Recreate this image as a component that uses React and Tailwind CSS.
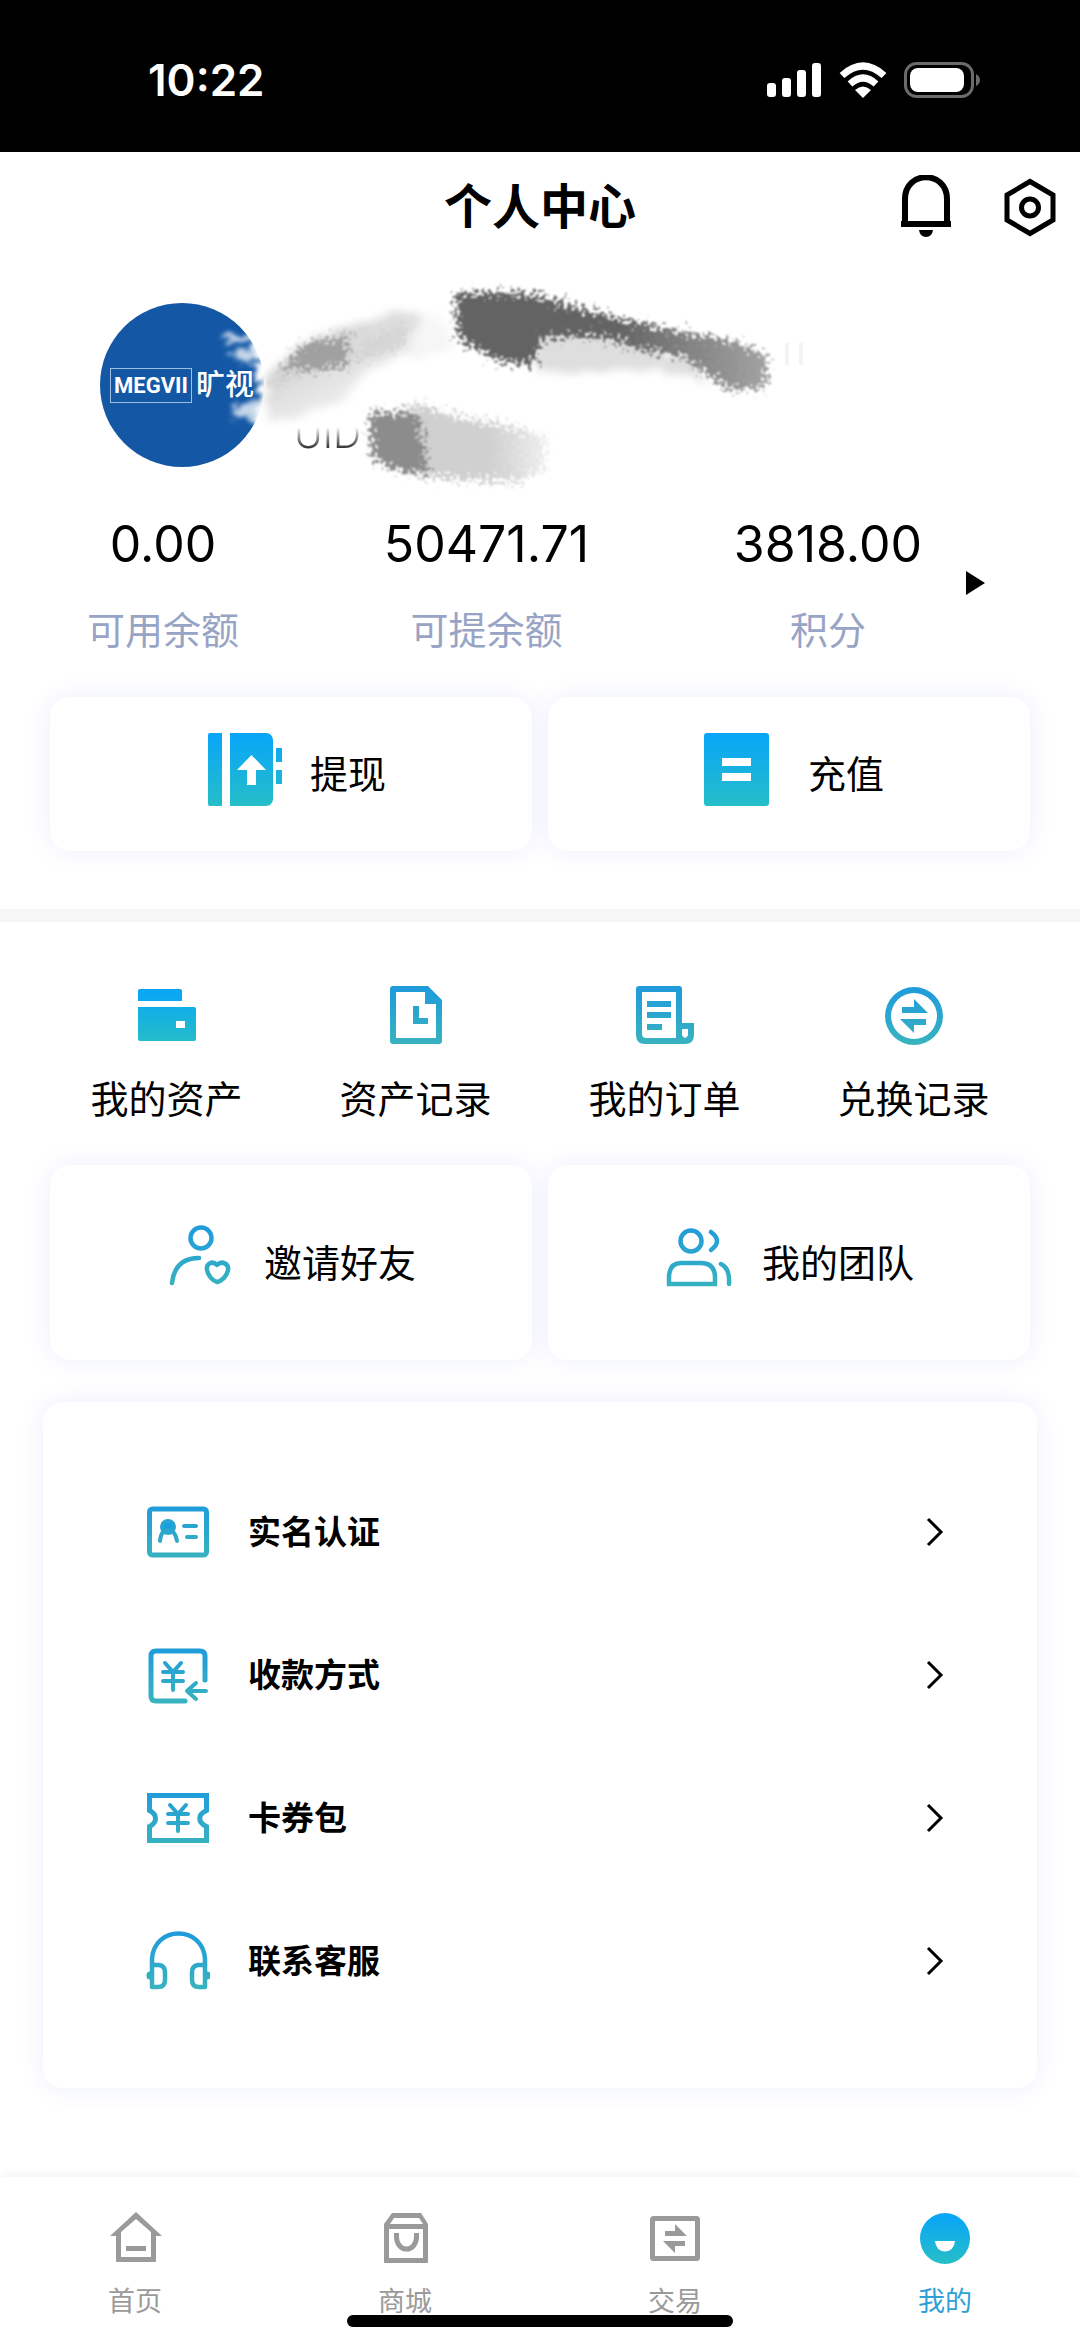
import React, { useState } from 'react';

// icons drawn with the vertical blue -> teal gradient
function GradientIcon({ id, size, height, line, muted, children }) {
  const h = height || size;
  const dim = line || muted;
  return (
    <svg width={size} height={h} viewBox={`0 0 ${size} ${h}`} aria-hidden="true" className="shrink-0">
      <defs>
        <linearGradient id={id} gradientUnits="userSpaceOnUse" x1="0" y1="4" x2="0" y2={h - 4}>
          <stop offset="0" stopColor={dim ? '#1f9bdc' : '#08a5f8'} />
          <stop offset="1" stopColor={dim ? '#38b3be' : '#25bec8'} />
        </linearGradient>
      </defs>
      {line ? (
        <g fill="none" stroke={`url(#${id})`} strokeWidth={line} strokeLinecap="round" strokeLinejoin="round">
          {children}
        </g>
      ) : (
        <g fill={`url(#${id})`}>{children}</g>
      )}
    </svg>
  );
}

function WithdrawIcon() {
  return (
    <GradientIcon id="withdraw" size={90} height={80}>
      <path d="M12 5a2 2 0 0 1 2-2h12v73H14a2 2 0 0 1-2-2z" />
      <path
        fillRule="evenodd"
        d="M34 3h36a7 7 0 0 1 7 7v59a7 7 0 0 1-7 7H34zM55.500 25L41 40h10v15h9V40h10z"
      />
      <path d="M80 18h6v14h-6zM80 40h6v14h-6z" />
    </GradientIcon>
  );
}

function RechargeIcon() {
  return (
    <GradientIcon id="recharge" size={90} height={80}>
      <path
        fillRule="evenodd"
        d="M13 3h59a3 3 0 0 1 3 3v67a3 3 0 0 1-3 3H13a3 3 0 0 1-3-3V6a3 3 0 0 1 3-3zM28 28v8h29v-8zM28 43v8h29v-8z"
      />
    </GradientIcon>
  );
}

function WalletIcon() {
  return (
    <GradientIcon id="wallet" size={64}>
      <path d="M5 5h40a2 2 0 0 1 2 2v10H3V7a2 2 0 0 1 2-2z" />
      <path
        fillRule="evenodd"
        d="M3 23h56a2 2 0 0 1 2 2v30a2 2 0 0 1-2 2H5a2 2 0 0 1-2-2zM41 37v7h9v-7z"
      />
    </GradientIcon>
  );
}

function RecordIcon() {
  return (
    <GradientIcon id="record" size={64} muted>
      <path
        fillRule="evenodd"
        d="M9 2h35l14 14v41a3 3 0 0 1-3 3H9a3 3 0 0 1-3-3V5a3 3 0 0 1 3-3zM12 8v46h40V20H41V8z"
      />
      <path d="M29 22h6v12h9v6H29z" />
    </GradientIcon>
  );
}

function OrderIcon() {
  return (
    <GradientIcon id="order" size={64} muted>
      <path
        fillRule="evenodd"
        d="M6 2h40a3 3 0 0 1 3 3v34h12v12q0 9-9 9H12q-9 0-9-9V5a3 3 0 0 1 3-3zM9 8v42q0 4 4 4h30V8zM49 45v6q1 3 3 3t3-3v-6z"
      />
      <path d="M14 17h24v6H14zM14 28h24v6H14zM14 40h15v6H14z" />
    </GradientIcon>
  );
}

function ExchangeIcon() {
  return (
    <GradientIcon id="exchange" size={64} muted>
      <path
        fillRule="evenodd"
        d="M32 3a29 29 0 1 1 0 58a29 29 0 1 1 0-58zM32 9a23 23 0 1 0 0 46a23 23 0 1 0 0-46z"
      />
      <path d="M20 23h12v-8l14 14H20zM44 41H32v8L18 35h26z" />
    </GradientIcon>
  );
}

function InviteIcon() {
  return (
    <GradientIcon id="invite" size={70} line={4.5}>
      <circle cx="35" cy="16" r="10.500" />
      <path d="M6 61Q9 36 33 36" />
      <path d="M51 43c-5-5-11-1-10 5c1 6 6 11 10 12c5-1 10-6 11-12c1-6-6-10-11-5z" />
    </GradientIcon>
  );
}

function TeamIcon() {
  return (
    <GradientIcon id="team" size={70} line={4.5}>
      <circle cx="27" cy="19" r="10.500" />
      <path d="M47 10q12 9 0 18" />
      <path strokeLinejoin="miter" d="M5 62V54Q6 41 17 41H37Q50 41 51 54V62Z" />
      <path d="M57 42q9 4 8 20" />
    </GradientIcon>
  );
}

function IdCardIcon() {
  return (
    <GradientIcon id="idcard" size={64} line={5}>
      <rect x="3.500" y="9" width="57" height="46" rx="3" />
      <circle cx="22" cy="27" r="6" fill="#159fdf" strokeWidth="4" />
      <path d="M14 41q1-11 8-11t9 11" strokeWidth="4" />
      <path d="M38 26h12M41 37h9" strokeWidth="4" />
    </GradientIcon>
  );
}

function PayIcon() {
  return (
    <GradientIcon id="pay" size={64} line={5}>
      <path d="M39 58H10q-5 0-5-5V13q0-5 5-5h44q5 0 5 5v24" />
      <path d="M19 20l8 9l8-9M17 29h20M17 38h20M27 29v18" strokeWidth="4" />
      <path d="M60 48H42M50 40l-9 8l9 8" strokeWidth="4" />
    </GradientIcon>
  );
}

function CouponIcon() {
  return (
    <GradientIcon id="coupon" size={64} line={5}>
      <path
        strokeLinejoin="miter"
        d="M3.500 9.500h57v15c-9 4-9 12 0 16v14h-57v-14c8-4 8-12 0-16z"
      />
      <path d="M24 19l8 9l8-9M22 28h20M22 37h20M32 28v17" strokeWidth="4" />
    </GradientIcon>
  );
}

function ServiceIcon() {
  return (
    <GradientIcon id="service" size={64} line={4.5}>
      <path d="M6 36v-6C8-4 57-4 59 30v6" />
      <path d="M6 36h7q6 1 6 7v8q0 7-7 7H6zM59 36h-7q-6 1-6 7v8q0 7 7 7h6z" />
      <path strokeWidth="7" d="M4 46v1M61 46v1" />
    </GradientIcon>
  );
}

function HomeIcon() {
  return (
    <svg width="56" height="56" viewBox="0 0 56 56" fill="currentColor" aria-hidden="true">
      <path fillRule="evenodd" d="M29 1L55 25h-6v25a1 1 0 0 1-1 1H10a1 1 0 0 1-1-1V25H3zM29 8L14 21v25h30V21z" />
      <path d="M19 35h20v5H19z" />
    </svg>
  );
}

function MallIcon() {
  return (
    <svg width="56" height="56" viewBox="0 0 56 56" fill="currentColor" aria-hidden="true">
      <path
        fillRule="evenodd"
        d="M15 2h29l7 11v38a1 1 0 0 1-1 1H8a1 1 0 0 1-1-1V13zM17 7l-4 6h33l-4-6zM12 18v29h34V18z"
      />
      <path d="M19.500 22v4a9.500 11.500 0 0 0 20 0v-4" fill="none" stroke="currentColor" strokeWidth="5" />
    </svg>
  );
}

function TradeIcon() {
  return (
    <svg width="56" height="56" viewBox="0 0 56 56" aria-hidden="true">
      <rect x="5.500" y="7.500" width="45" height="40" rx="1" fill="none" stroke="currentColor" strokeWidth="5" />
      <path d="M18 20h10v-7l12 12H18zM38 35H28v7L16 30h22z" fill="currentColor" />
    </svg>
  );
}

function MineIcon() {
  return (
    <GradientIcon id="mine" size={56}>
      <path
        fillRule="evenodd"
        d="M28 2a25 25.500 0 1 1 0 51a25 25.500 0 1 1 0-51zM18 30q1 10 10 10.500q9-.5 10-10.500z"
      />
    </GradientIcon>
  );
}

function StatusBar() {
  return (
    <div className="flex h-[152px] items-center justify-between bg-black pt-2 pr-[98px] pl-[148px] text-white">
      <span className="text-[44px] leading-[56px] font-semibold">10:22</span>
      <div className="flex items-center gap-4">
        <svg width="56" height="36" viewBox="0 0 56 36" fill="currentColor" aria-hidden="true">
          <rect x="0" y="21" width="9" height="14" rx="3" />
          <rect x="15" y="16" width="9" height="19" rx="3" />
          <rect x="30" y="8" width="9" height="27" rx="3" />
          <rect x="45" y="1" width="9" height="34" rx="3" />
        </svg>
        <svg width="48" height="36" viewBox="0 0 48 36" aria-hidden="true">
          <g fill="none" stroke="currentColor" strokeWidth="7">
            <path d="M3 13.500Q24-5.500 45 13.500" />
            <path d="M11 22Q24 10 37 22" />
          </g>
          <path d="M16 28Q24 21 32 28L24 36Z" fill="currentColor" />
        </svg>
        <svg width="79" height="36" viewBox="0 0 79 36" aria-hidden="true">
          <rect x="2.500" y="1.500" width="67" height="33" rx="11" fill="none" stroke="#6b6b6b" strokeWidth="3" />
          <rect x="7" y="6" width="54" height="24" rx="8" fill="currentColor" />
          <path d="M73 12q4 2 4 6t-4 6z" fill="#6b6b6b" />
        </svg>
      </div>
    </div>
  );
}

function Header() {
  return (
    <header className="grid h-[110px] grid-cols-[1fr_auto_1fr] items-center">
      <span />
      <h1 className="text-[48px] leading-[64px] font-bold">个人中心</h1>
      <div className="flex justify-end gap-10 pr-[18px]">
        <button type="button" aria-label="消息">
          <svg width="64" height="64" viewBox="0 0 64 64" fill="none" stroke="currentColor" strokeWidth="6" aria-hidden="true">
            <path d="M11 49V24C11-5 53-5 53 24v25" />
            <path d="M7 49h50" />
            <path d="M25 55h14q-1 7-7 7t-7-7z" fill="currentColor" stroke="none" />
          </svg>
        </button>
        <button type="button" aria-label="设置">
          <svg width="64" height="64" viewBox="0 0 64 64" fill="none" stroke="currentColor" strokeWidth="5" aria-hidden="true">
            <path d="M32 6.500l23 13.500v25L32 58.500L9 45V20z" />
            <circle cx="32" cy="32.500" r="8.500" />
          </svg>
        </button>
      </div>
    </header>
  );
}

// grey brush strokes that cover the user name and the id
function BrushStrokes() {
  return (
    <svg
      width="740"
      height="230"
      viewBox="80 270 740 230"
      aria-hidden="true"
      className="pointer-events-none absolute top-2 left-20"
    >
      <defs>
        <filter id="rough" x="-10%" y="-10%" width="120%" height="120%">
          <feTurbulence type="fractalNoise" baseFrequency="0.28" numOctaves="2" seed="4" />
          <feDisplacementMap in="SourceGraphic" scale="34" xChannelSelector="R" yChannelSelector="G" />
          <feGaussianBlur stdDeviation="1.1" />
        </filter>
        <filter id="soft" x="-20%" y="-20%" width="140%" height="140%">
          <feTurbulence type="fractalNoise" baseFrequency="0.05 0.15" numOctaves="3" seed="9" />
          <feDisplacementMap in="SourceGraphic" scale="18" xChannelSelector="R" yChannelSelector="G" />
          <feGaussianBlur stdDeviation="4" />
        </filter>
        <filter id="streak" x="-20%" y="-20%" width="140%" height="140%">
          <feTurbulence type="fractalNoise" baseFrequency="0.06 0.25" numOctaves="2" seed="2" />
          <feDisplacementMap in="SourceGraphic" scale="24" xChannelSelector="R" yChannelSelector="G" />
          <feGaussianBlur stdDeviation="2" />
        </filter>
        <linearGradient id="nameFade" gradientUnits="userSpaceOnUse" x1="300" y1="340" x2="350" y2="430">
          <stop offset="0" stopColor="#d0d0d0" />
          <stop offset="1" stopColor="#f8f8f8" />
        </linearGradient>
        <linearGradient id="tailFade" x1="0" y1="0" x2="1" y2="0">
          <stop offset="0" stopColor="#666666" />
          <stop offset="0.5" stopColor="#858585" />
          <stop offset="1" stopColor="#a2a2a2" />
        </linearGradient>
        <linearGradient id="idFade" gradientUnits="userSpaceOnUse" x1="490" y1="0" x2="552" y2="0">
          <stop offset="0" stopColor="#d0d0d0" />
          <stop offset="1" stopColor="#f2f2f2" />
        </linearGradient>
      </defs>
      <g filter="url(#streak)" fill="#fff">
        <path opacity="0.75" d="M226 334h30v8h-28zM234 350l28-4v18l-24-4z" />
        <path opacity="0.75" d="M232 404l26-4l6 8l-14 14l-16-4z" />
        <path d="M252 330l14 6l8 90l-20-2l6-30z" />
      </g>
      <g filter="url(#soft)">
        <path fill="url(#nameFade)" d="M266 380l30-34l50-18l60-18l22 10l-10 28l-50 22l-24 30l-44 18l-30 2z" />
        <path fill="#f6f6f6" d="M420 318l26 2l10 30l-50 12z" />
        <path fill="#dedede" d="M536 332h92l20 14l40 10l20 28l-50-14l-50 2h-70z" />
      </g>
      <g filter="url(#rough)">
        <path fill="#cfcfcf" d="M268 384l18-20l60-4l20-20l44-16l-6 22l-40 14l-50 6l-34 20z" opacity="0.6" />
        <path fill="#9a9a9a" d="M280 370l26-26l42-8v30l-34 4z" opacity="0.9" />
        <path fill="#646464" d="M456 294l27-2l46 2l50 14l54 14v20l-50-6l-42 2l-8 28l-30-4l-34-16l-12-10z" />
        <path fill="url(#tailFade)" d="M622 320l62 12l54 10l28 14v32l-38 2l-22-16l-24-18l-58-10z" />
        <path fill="url(#idFade)" d="M400 408l22-2l40 12l54 10l32 10l-4 16l2 14l-26 14l-56-2l-60-6l-10-4z" />
        <path fill="#8c8c8c" d="M370 412l48 2l6 30l4 30l-28-2l-28-14z" />
      </g>
      <path stroke="#f4f4f4" strokeWidth="4" d="M787 343v22M801 343v22" />
    </svg>
  );
}

function Profile() {
  return (
    <section className="relative flex items-end gap-[30px] pt-[41px] pl-[100px]">
      <div className="flex size-[164px] items-center justify-center gap-1 rounded-full bg-[#1458a5] text-white">
        <span className="border border-[#9cc0e4] px-[3px] font-[Roboto,'Liberation_Sans',sans-serif] text-[22px] leading-[33px] font-bold">
          MEGVII
        </span>
        <span className="text-[29px] leading-[36px] font-medium whitespace-nowrap">旷视</span>
      </div>
      <p className="bg-gradient-to-b from-white from-30% to-black to-85% bg-clip-text pb-[9px] text-[39px] leading-[48px] font-light text-transparent">
        UID
      </p>
      <BrushStrokes />
    </section>
  );
}

const stats = [
  { value: '0.00', label: '可用余额' },
  { value: '50471.71', label: '可提余额' },
  { value: '3818.00', label: '积分' },
];

function Stats() {
  return (
    <section className="mt-[49px] flex items-center gap-11 pr-[95px] pl-[87px]">
      <dl className="flex flex-1 justify-between">
        {stats.map((s) => (
          <div key={s.label} className="flex flex-col-reverse items-center gap-[34px]">
            <dt className="text-[38px] leading-[48px] text-[#98a4c5]">{s.label}</dt>
            <dd className="text-[50px] leading-[56px]">{s.value}</dd>
          </div>
        ))}
      </dl>
      <button type="button" aria-label="详情" className="pb-1">
        <svg width="19" height="24" viewBox="0 0 19 24" fill="currentColor" aria-hidden="true">
          <path d="M0 0l19 12L0 24z" />
        </svg>
      </button>
    </section>
  );
}

const services = [
  { label: '我的资产', icon: <WalletIcon /> },
  { label: '资产记录', icon: <RecordIcon /> },
  { label: '我的订单', icon: <OrderIcon /> },
  { label: '兑换记录', icon: <ExchangeIcon /> },
];

const menu = [
  { label: '实名认证', icon: <IdCardIcon /> },
  { label: '收款方式', icon: <PayIcon /> },
  { label: '卡券包', icon: <CouponIcon /> },
  { label: '联系客服', icon: <ServiceIcon /> },
];

const tabs = [
  { label: '首页', icon: <HomeIcon /> },
  { label: '商城', icon: <MallIcon /> },
  { label: '交易', icon: <TradeIcon /> },
  { label: '我的', icon: <MineIcon /> },
];

export default function App() {
  const [active, setActive] = useState('我的');

  return (
    <div className="relative flex min-h-screen flex-col bg-white font-[Inter,'Noto_Sans_CJK_SC',sans-serif] text-black">
      <StatusBar />
      <Header />

      <main className="flex-1">
        <Profile />
        <Stats />

        <section className="mt-[43px] grid grid-cols-2 gap-4 px-[50px]">
          <button type="button" className="flex h-[154px] items-center justify-center gap-6 rounded-[20px] bg-white shadow-[0_0_24px_rgba(90,110,240,0.11)]">
            <span className="pb-2"><WithdrawIcon /></span>
            <span className="text-[38px] leading-[48px]">提现</span>
          </button>
          <button type="button" className="flex h-[154px] items-center justify-center gap-6 rounded-[20px] bg-white shadow-[0_0_24px_rgba(90,110,240,0.11)]">
            <span className="pb-2"><RechargeIcon /></span>
            <span className="text-[38px] leading-[48px]">充值</span>
          </button>
        </section>

        <div className="mt-[58px] h-[13px] bg-[#f6f6f6]" />

        <section className="grid grid-cols-4 px-[42px] pt-[62px]">
          {services.map((s) => (
            <button key={s.label} type="button" className="flex flex-col items-center gap-[27px]">
              {s.icon}
              <span className="text-[38px] leading-[48px]">{s.label}</span>
            </button>
          ))}
        </section>

        <section className="mt-[42px] grid grid-cols-2 gap-4 px-[50px]">
          <button type="button" className="flex h-[195px] items-center justify-center gap-7 rounded-[20px] bg-white shadow-[0_0_24px_rgba(90,110,240,0.11)]">
            <span className="pb-3"><InviteIcon /></span>
            <span className="text-[38px] leading-[48px]">邀请好友</span>
          </button>
          <button type="button" className="flex h-[195px] items-center justify-center gap-7 rounded-[20px] bg-white shadow-[0_0_24px_rgba(90,110,240,0.11)]">
            <span className="pb-3"><TeamIcon /></span>
            <span className="text-[38px] leading-[48px]">我的团队</span>
          </button>
        </section>

        <ul className="mx-[43px] mt-[42px] rounded-[20px] bg-white pt-[58px] pb-14 shadow-[0_0_24px_rgba(90,110,240,0.11)]">
          {menu.map((m) => (
            <li key={m.label}>
              <a href="#" className="flex h-[143px] items-center gap-[38px] pr-[93px] pl-[103px]">
                {m.icon}
                <span className="flex-1 text-[33px] leading-[48px] font-bold">{m.label}</span>
                <svg width="18" height="30" viewBox="0 0 18 30" fill="none" stroke="currentColor" strokeWidth="3" aria-hidden="true">
                  <path d="M2 2l13 13L2 28" />
                </svg>
              </a>
            </li>
          ))}
        </ul>
      </main>

      <nav className="mt-[89px] grid h-[170px] grid-cols-4 bg-white pt-[34px] shadow-[0_-2px_10px_rgba(0,0,0,0.05)]">
        {tabs.map((t) => (
          <button
            key={t.label}
            type="button"
            onClick={() => setActive(t.label)}
            className={`flex flex-col items-center gap-[17px] text-[27px] leading-[36px] ${
              active === t.label ? 'text-[#2f9fd6]' : 'text-[#9a9a9a]'
            }`}
          >
            {t.icon}
            <span>{t.label}</span>
          </button>
        ))}
      </nav>

      <div className="absolute bottom-5 left-1/2 h-3 w-[386px] -translate-x-1/2 rounded-full bg-black" />
    </div>
  );
}
